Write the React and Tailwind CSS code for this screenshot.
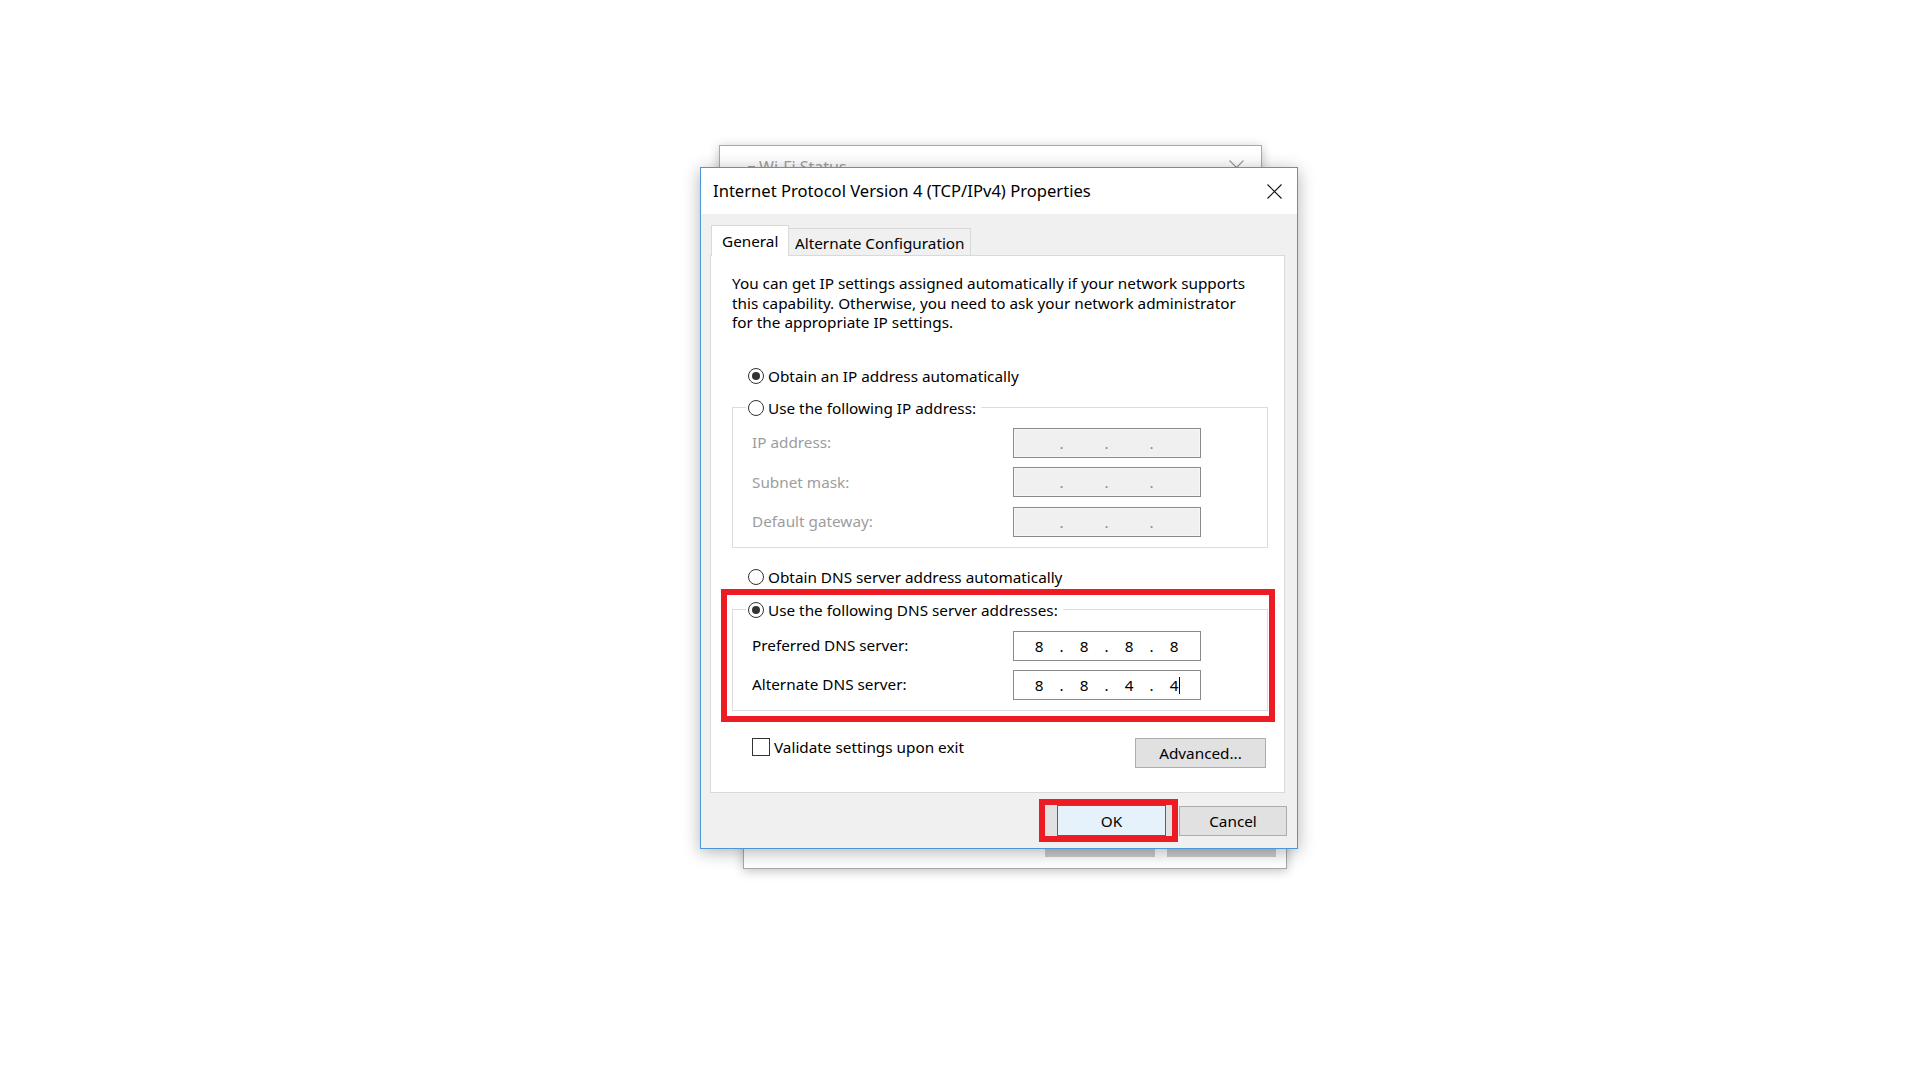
import React from "react";

function Radio({ checked }) {
  return (
    <span className="flex h-[16px] w-[16px] shrink-0 items-center justify-center rounded-full border border-[#333333] bg-white">
      {checked ? <span className="h-[8px] w-[8px] rounded-full bg-[#333333]" /> : null}
    </span>
  );
}

function IpField({ values, disabled, cursor }) {
  const items = [];
  values.forEach((v, i) => {
    const last = i === values.length - 1;
    items.push(
      <span key={"s" + i} className="flex w-[36px] justify-center">
        <span className="relative">
          {v}
          {last && cursor ? (
            <span className="absolute left-full top-[2px] ml-[1px] h-[17px] w-[1px] bg-black" />
          ) : null}
        </span>
      </span>
    );
    if (!last) {
      items.push(
        <span key={"d" + i} className={disabled ? "w-[9px] text-center text-[#8c8c8c]" : "w-[9px] text-center"}>
          .
        </span>
      );
    }
  });
  return (
    <div
      className={
        disabled
          ? "flex h-[30px] w-[188px] items-center border border-[#8a8a8a] bg-[#f0f0f0] pl-[7px] leading-[20px] shadow-[inset_0_0_0_1px_#f7f7f7]"
          : "flex h-[30px] w-[188px] items-center border border-[#8a8a8a] bg-white pl-[7px] leading-[20px] text-black"
      }
    >
      {items}
    </div>
  );
}

function FieldRow({ label, values, disabled, cursor }) {
  return (
    <div className="flex h-[30px] items-center">
      <span className={disabled ? "w-[261px] text-[#9d9d9d]" : "w-[261px] text-black"}>{label}</span>
      <IpField values={values} disabled={disabled} cursor={cursor} />
    </div>
  );
}

function CloseX({ color, size }) {
  return (
    <svg width={size} height={size} viewBox="0 0 15 15" fill="none">
      <path d="M0.5 0.5L14.5 14.5M14.5 0.5L0.5 14.5" stroke={color} strokeWidth="1.1" />
    </svg>
  );
}

export default function App() {
  return (
    <div className="relative h-[1080px] w-[1920px] overflow-hidden bg-white font-['Noto_Sans',sans-serif] text-[15.3px] text-black">
      {/* Window behind, lower */}
      <div className="absolute left-[743px] top-[300px] flex h-[569px] w-[544px] flex-col justify-end border border-[#a8a8a8] bg-white pb-[11px] pr-[10px] shadow-[0_2px_10px_rgba(0,0,0,0.25)]">
        <div className="flex justify-end gap-[12px]">
          <div className="h-[30px] w-[110px] bg-[#cccccc]" />
          <div className="h-[30px] w-[109px] bg-[#cccccc]" />
        </div>
      </div>

      {/* Wi-Fi Status window behind */}
      <div className="absolute left-[719px] top-[145px] h-[600px] w-[543px] border border-[#a8a8a8] bg-white shadow-[0_2px_10px_rgba(0,0,0,0.25)]">
        <div className="flex h-[42px] items-center pl-[28px] pr-[17px] text-[16px] text-[#a0a0a0]">
          <span className="mr-[4px] h-[2px] w-[7px] bg-[#a0a0a0]" />
          <span>Wi-Fi Status</span>
          <span className="ml-auto flex">
            <CloseX color="#9a9a9a" size={15} />
          </span>
        </div>
      </div>

      {/* Main dialog */}
      <div className="absolute left-[700px] top-[167px] flex h-[682px] w-[598px] flex-col border border-[#4d95dc] bg-[#f0f0f0] shadow-[0_3px_16px_rgba(0,0,0,0.3)]">
        {/* Title bar */}
        <div className="flex h-[46px] shrink-0 items-center bg-white pl-[12px]">
          <span className="text-[16.6px]">Internet Protocol Version 4 (TCP/IPv4) Properties</span>
          <span className="ml-auto flex w-[46px] justify-center">
            <CloseX color="#111111" size={15} />
          </span>
        </div>

        {/* Body */}
        <div className="flex flex-1 flex-col pt-[11px]">
          {/* Tabs */}
          <div className="flex h-[30px] items-start pl-[10px]">
            <div className="relative z-10 h-[31px] w-[78px] border border-b-0 border-[#d9d9d9] bg-white pl-[10px] pt-[5px] leading-[20px]">
              General
            </div>
            <div className="mt-[3px] h-[27px] w-[182px] border border-b-0 border-l-0 border-[#d9d9d9] bg-[#f0f0f0] pl-[6px] pt-[4px] leading-[20px]">
              Alternate Configuration
            </div>
          </div>

          {/* Panel */}
          <div className="ml-[9px] flex h-[538px] w-[575px] flex-col border border-[#d9d9d9] bg-white pl-[21px] pr-[16px] pt-[18px]">
            <p className="whitespace-nowrap leading-[19.5px]">
              You can get IP settings assigned automatically if your network supports
              <br />
              this capability. Otherwise, you need to ask your network administrator
              <br />
              for the appropriate IP settings.
            </p>

            <div className="mt-[33px] flex h-[20px] items-center gap-[4px] pl-[16px] leading-[20px]">
              <Radio checked />
              <span>Obtain an IP address automatically</span>
            </div>

            <fieldset className="mt-[12px] border border-[#dcdcdc] pb-[10px] pl-[19px] pr-[19px] pt-[10px]">
              <legend className="ml-[-6px] pl-[2px] pr-[5px] leading-[20px]">
                <span className="flex items-center gap-[4px]">
                  <Radio />
                  <span>Use the following IP address:</span>
                </span>
              </legend>
              <div className="flex flex-col gap-[9.5px]">
                <FieldRow label="IP address:" values={["", "", "", ""]} disabled />
                <FieldRow label="Subnet mask:" values={["", "", "", ""]} disabled />
                <FieldRow label="Default gateway:" values={["", "", "", ""]} disabled />
              </div>
            </fieldset>

            <div className="mt-[19px] flex h-[20px] items-center gap-[4px] pl-[16px] leading-[20px]">
              <Radio />
              <span>Obtain DNS server address automatically</span>
            </div>

            <div className="ml-[-11px] mr-[-7px] mt-[2px] border-[6px] border-[#ed1c24] pb-[5px] pl-[5px] pr-[1px] pt-[5px]">
              <fieldset className="border border-[#dcdcdc] pb-[10px] pl-[19px] pr-[19px] pt-[11px]">
                <legend className="ml-[-6px] pl-[2px] pr-[5px] leading-[20px]">
                  <span className="flex items-center gap-[4px]">
                    <Radio checked />
                    <span>Use the following DNS server addresses:</span>
                  </span>
                </legend>
                <div className="flex flex-col gap-[9px]">
                  <FieldRow label="Preferred DNS server:" values={["8", "8", "8", "8"]} />
                  <FieldRow label="Alternate DNS server:" values={["8", "8", "4", "4"]} cursor />
                </div>
              </fieldset>
            </div>

            <div className="mt-[16px] flex items-start justify-between">
              <div className="flex h-[18px] items-center gap-[4px] pl-[20px] leading-[20px]">
                <span className="h-[18px] w-[18px] border border-[#333333] bg-white" />
                <span>Validate settings upon exit</span>
              </div>
              <button className="mr-[2px] flex h-[30px] w-[131px] items-center justify-center border border-[#adadad] bg-[#e1e1e1] leading-[20px]">
                Advanced...
              </button>
            </div>
          </div>

          {/* Bottom buttons */}
          <div className="mt-[6px] flex items-start justify-end pr-[10px]">
            <div className="flex h-[43px] w-[139px] border-[6px] border-[#ed1c24] bg-[#e1e1e1] pl-[12px] pr-[6px]">
              <button className="flex h-full w-full items-center justify-center border border-[#0078d7] bg-[#e5f1fb] leading-[20px]">
                OK
              </button>
            </div>
            <button className="ml-[1px] mt-[7px] flex h-[30px] w-[108px] items-center justify-center border border-[#adadad] bg-[#e1e1e1] leading-[20px]">
              Cancel
            </button>
          </div>
        </div>
      </div>
    </div>
  );
}
